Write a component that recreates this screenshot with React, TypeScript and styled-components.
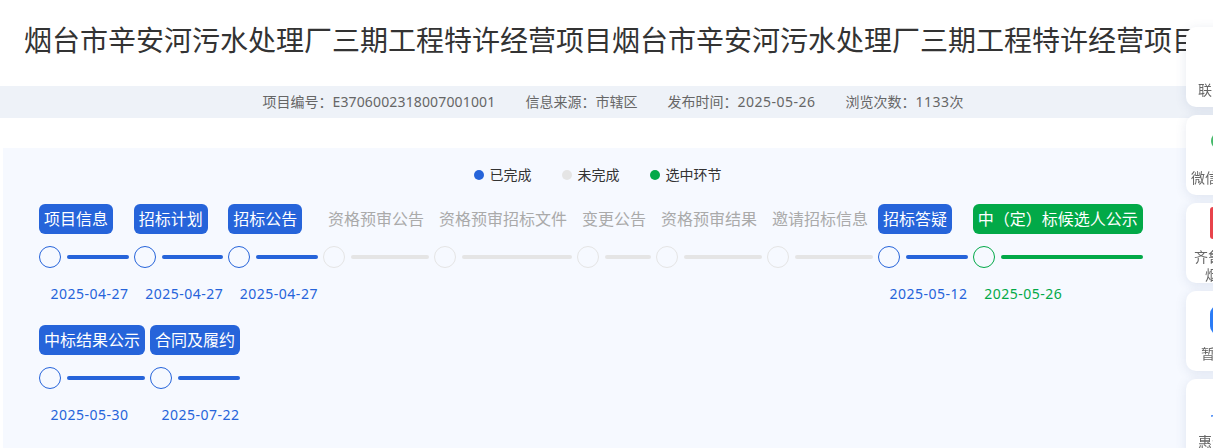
import * as React from "react"
import styled, { createGlobalStyle } from "styled-components"

const BLUE = "#2664da"
const GREEN = "#02a948"
const GREY = "#e5e5e5"

type StepState = "done" | "todo" | "current"

const stateColor = (state: StepState) =>
  state === "done" ? BLUE : state === "current" ? GREEN : GREY

const GlobalStyle = createGlobalStyle`
  html, body {
    margin: 0;
    padding: 0;
    height: 100%;
    overflow: hidden;
    background: #fff;
    font-family: "Noto Sans", "Noto Sans CJK SC", sans-serif;
  }
`

const Page = styled.div`
  height: 448px;
  overflow: hidden;
`

const Title = styled.h1`
  margin: 0;
  padding: 0 24px;
  height: 86px;
  font-size: 28px;
  font-weight: 400;
  line-height: 80px;
  color: #333;
  white-space: nowrap;
  overflow: hidden;
`

const InfoBar = styled.div`
  display: flex;
  justify-content: center;
  gap: 30px;
  height: 32px;
  padding-left: 13px;
  background: #eef2f8;
  font-size: 14px;
  line-height: 32px;
  color: #666;
`

const InfoValue = styled.span<{ $spacing: number }>`
  letter-spacing: ${(p) => p.$spacing}px;
`

const Panel = styled.section`
  margin: 30px 0 0 3px;
  padding: 17px 36px 0;
  height: 300px;
  background: #f6f9ff;
`

const Legend = styled.div`
  display: flex;
  justify-content: center;
  gap: 30px;
  margin-bottom: 19px;
  padding-right: 21px;
`

const LegendItem = styled.div`
  display: flex;
  align-items: center;
  gap: 6px;
  font-size: 14px;
  line-height: 20px;
  color: #333;
`

const LegendDot = styled.i<{ $state: StepState }>`
  width: 10px;
  height: 10px;
  border-radius: 50%;
  background: ${(p) => stateColor(p.$state)};
`

const Track = styled.div`
  display: flex;
  flex-wrap: wrap;
  align-items: flex-start;
`

const Step = styled.div<{ $state: StepState }>`
  margin: 0 5px 21px 0;
  min-width: ${(p) => (p.$state === "todo" ? "0" : "89.67px")};
`

const StepLabel = styled.div<{ $state: StepState }>`
  display: inline-block;
  padding: 0 5px;
  height: 30px;
  border-radius: 6px;
  background: ${(p) => (p.$state === "todo" ? "transparent" : stateColor(p.$state))};
  font-size: 16px;
  line-height: 30px;
  color: ${(p) => (p.$state === "todo" ? "#aaa" : "#fff")};
  white-space: nowrap;
  vertical-align: top;
`

const StepBar = styled.div`
  display: flex;
  align-items: center;
  gap: 6px;
  margin-top: 12px;
`

const Node = styled.span<{ $state: StepState }>`
  flex: none;
  box-sizing: border-box;
  width: 22px;
  height: 22px;
  border: 1px solid ${(p) => stateColor(p.$state)};
  border-radius: 50%;
`

const Line = styled.span<{ $state: StepState }>`
  flex: 1;
  height: 4px;
  border-radius: 2px;
  background: ${(p) => stateColor(p.$state)};
`

const StepDate = styled.div<{ $state: StepState }>`
  margin-top: 16px;
  padding-left: 11.5px;
  height: 20px;
  font-size: 14px;
  line-height: 20px;
  letter-spacing: 0.5px;
  color: ${(p) => stateColor(p.$state)};
  white-space: nowrap;
`

const SideDock = styled.aside`
  position: fixed;
  top: 27px;
  left: 1186px;
  display: flex;
  flex-direction: column;
  gap: 8px;
  width: 80px;
`

const DockCard = styled.a`
  display: block;
  box-sizing: border-box;
  height: 80px;
  padding-top: 4px;
  border-radius: 10px;
  background: #fff;
  box-shadow: 0 2px 12px rgba(60, 80, 130, 0.12);
  text-align: center;
`

const DockIcon = styled.div<{ $compact?: boolean }>`
  display: flex;
  align-items: center;
  justify-content: center;
  height: ${(p) => (p.$compact ? "32px" : "50px")};
  margin-bottom: ${(p) => (p.$compact ? "9px" : "0")};
`

const DockLabel = styled.div`
  font-size: 14px;
  line-height: 18px;
  color: #666;
  white-space: nowrap;
`

const steps: { name: string; state: StepState; date?: string }[] = [
  { name: "项目信息", state: "done", date: "2025-04-27" },
  { name: "招标计划", state: "done", date: "2025-04-27" },
  { name: "招标公告", state: "done", date: "2025-04-27" },
  { name: "资格预审公告", state: "todo" },
  { name: "资格预审招标文件", state: "todo" },
  { name: "变更公告", state: "todo" },
  { name: "资格预审结果", state: "todo" },
  { name: "邀请招标信息", state: "todo" },
  { name: "招标答疑", state: "done", date: "2025-05-12" },
  { name: "中（定）标候选人公示", state: "current", date: "2025-05-26" },
  { name: "中标结果公示", state: "done", date: "2025-05-30" },
  { name: "合同及履约", state: "done", date: "2025-07-22" },
]

const HeadsetIcon = () => (
  <svg width="24" height="24" viewBox="0 0 24 24" fill="none" stroke="#2664da" strokeWidth="2">
    <path d="M4 14v-2a8 8 0 0 1 16 0v2" />
    <rect x="3" y="14" width="4" height="6" rx="1" />
    <rect x="17" y="14" width="4" height="6" rx="1" />
  </svg>
)

const WechatIcon = () => (
  <svg width="32" height="30" viewBox="0 0 32 30">
    <ellipse cx="13" cy="12" rx="12" ry="10" fill="#45b96a" />
    <ellipse cx="22" cy="19" rx="9.5" ry="8" fill="#5fc983" stroke="#fff" />
    <circle cx="9" cy="9" r="1.5" fill="#fff" />
    <circle cx="17" cy="9" r="1.5" fill="#fff" />
  </svg>
)

const NewsIcon = () => (
  <svg width="32" height="32" viewBox="0 0 32 32">
    <rect width="32" height="32" rx="3" fill="#e8434b" />
    <rect x="3" y="6" width="3" height="12" fill="#f7b4b7" />
    <rect x="6" y="6" width="20" height="5" fill="#fff" />
    <rect x="6" y="15" width="20" height="2" fill="#fff" />
    <rect x="6" y="21" width="20" height="2" fill="#fff" />
  </svg>
)

const AppIcon = () => (
  <svg width="32" height="30" viewBox="0 0 32 30">
    <rect width="32" height="30" rx="9" fill="#2b7cf6" />
    <circle cx="16" cy="15" r="13" fill="#fff" />
    <circle cx="16" cy="15" r="6" fill="#2b7cf6" />
  </svg>
)

const BenefitIcon = () => (
  <svg width="32" height="32" viewBox="0 0 32 32" fill="none" stroke="#3b82f6" strokeWidth="1.6">
    <path d="M1 24c5 0 9-2 13-6l8-8" />
    <circle cx="24" cy="8" r="5" />
  </svg>
)

const App = () => (
  <Page>
    <GlobalStyle />
    <Title>
      烟台市辛安河污水处理厂三期工程特许经营项目烟台市辛安河污水处理厂三期工程特许经营项目
    </Title>
    <InfoBar>
      <span>
        项目编号：<InfoValue $spacing={0.15}>E3706002318007001001</InfoValue>
      </span>
      <span>信息来源：市辖区</span>
      <span>
        发布时间：<InfoValue $spacing={0.5}>2025-05-26</InfoValue>
      </span>
      <span>
        浏览次数：<InfoValue $spacing={0.5}>1133</InfoValue>次
      </span>
    </InfoBar>
    <Panel>
      <Legend>
        <LegendItem>
          <LegendDot $state="done" />
          已完成
        </LegendItem>
        <LegendItem>
          <LegendDot $state="todo" />
          未完成
        </LegendItem>
        <LegendItem>
          <LegendDot $state="current" />
          选中环节
        </LegendItem>
      </Legend>
      <Track>
        {steps.map((step) => (
          <Step key={step.name} $state={step.state}>
            <StepLabel $state={step.state}>{step.name}</StepLabel>
            <StepBar>
              <Node $state={step.state} />
              <Line $state={step.state} />
            </StepBar>
            <StepDate $state={step.state}>{step.date}</StepDate>
          </Step>
        ))}
      </Track>
    </Panel>
    <SideDock>
      <DockCard>
        <DockIcon>
          <HeadsetIcon />
        </DockIcon>
        <DockLabel>联系我们</DockLabel>
      </DockCard>
      <DockCard>
        <DockIcon>
          <WechatIcon />
        </DockIcon>
        <DockLabel>微信公众号</DockLabel>
      </DockCard>
      <DockCard>
        <DockIcon $compact>
          <NewsIcon />
        </DockIcon>
        <DockLabel>
          齐鲁e招采
          <br />
          烟台市
        </DockLabel>
      </DockCard>
      <DockCard>
        <DockIcon>
          <AppIcon />
        </DockIcon>
        <DockLabel>暂无e招</DockLabel>
      </DockCard>
      <DockCard>
        <DockIcon>
          <BenefitIcon />
        </DockIcon>
        <DockLabel>惠企政策</DockLabel>
      </DockCard>
    </SideDock>
  </Page>
)

export default App
